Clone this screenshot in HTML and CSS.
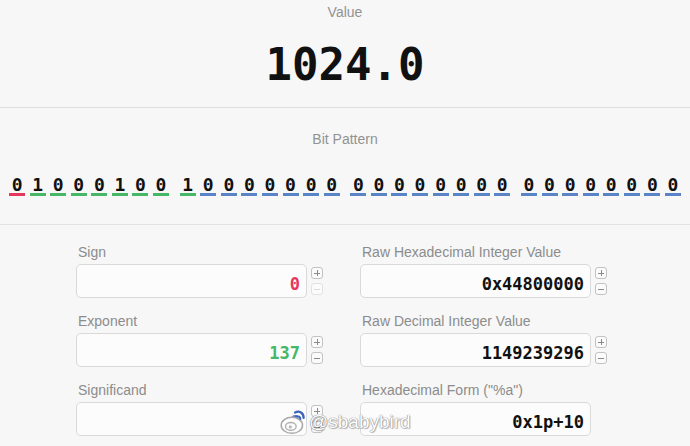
FILE: index.html
```html
<!DOCTYPE html>
<html>
<head>
<meta charset="utf-8">
<link rel="stylesheet" href="styles.css">
</head>
<body>
<section class="value-sec">
  <div class="cap">Value</div>
  <div class="big">1024.0</div>
</section>
<section class="bits-sec">
  <div class="cap">Bit Pattern</div>
  <div class="bits">
    <div class="grp">
      <span class="b sg">0</span><span class="b ex">1</span><span class="b ex">0</span><span class="b ex">0</span><span class="b ex">0</span><span class="b ex">1</span><span class="b ex">0</span><span class="b ex">0</span>
    </div>
    <div class="grp">
      <span class="b ex">1</span><span class="b mt">0</span><span class="b mt">0</span><span class="b mt">0</span><span class="b mt">0</span><span class="b mt">0</span><span class="b mt">0</span><span class="b mt">0</span>
    </div>
    <div class="grp">
      <span class="b mt">0</span><span class="b mt">0</span><span class="b mt">0</span><span class="b mt">0</span><span class="b mt">0</span><span class="b mt">0</span><span class="b mt">0</span><span class="b mt">0</span>
    </div>
    <div class="grp">
      <span class="b mt">0</span><span class="b mt">0</span><span class="b mt">0</span><span class="b mt">0</span><span class="b mt">0</span><span class="b mt">0</span><span class="b mt">0</span><span class="b mt">0</span>
    </div>
  </div>
</section>
<section class="form">
  <div class="field">
    <label class="lbl">Sign</label>
    <div class="row">
      <div class="box red">0</div>
      <div class="step"><span class="btn plus"></span><span class="btn minus dis"></span></div>
    </div>
  </div>
  <div class="field">
    <label class="lbl">Raw Hexadecimal Integer Value</label>
    <div class="row">
      <div class="box">0x44800000</div>
      <div class="step"><span class="btn plus"></span><span class="btn minus"></span></div>
    </div>
  </div>
  <div class="field">
    <label class="lbl">Exponent</label>
    <div class="row">
      <div class="box green">137</div>
      <div class="step"><span class="btn plus"></span><span class="btn minus"></span></div>
    </div>
  </div>
  <div class="field">
    <label class="lbl">Raw Decimal Integer Value</label>
    <div class="row">
      <div class="box">1149239296</div>
      <div class="step"><span class="btn plus"></span><span class="btn minus"></span></div>
    </div>
  </div>
  <div class="field">
    <label class="lbl">Significand</label>
    <div class="row">
      <div class="box blue">0</div>
      <div class="step"><span class="btn plus"></span><span class="btn minus"></span></div>
    </div>
  </div>
  <div class="field">
    <label class="lbl">Hexadecimal Form ("%a")</label>
    <div class="row">
      <div class="box">0x1p+10</div>
    </div>
  </div>
</section>
<div class="wm">
  <svg class="wm-logo" width="28" height="32" viewBox="0 0 26 30">
    <ellipse cx="11" cy="20" rx="10" ry="7.5" fill="#fdfdfd" stroke="#a8a8a8" stroke-width="1.4"/>
    <ellipse cx="10" cy="21" rx="5" ry="3.6" fill="none" stroke="#b0b0b0" stroke-width="1.3"/>
    <circle cx="9.5" cy="21.5" r="1.5" fill="#b8b8b8"/>
    <path d="M14 8 C18 6 22 8 22 13" fill="none" stroke="#3d64b8" stroke-width="2.2" stroke-linecap="round"/>
    <path d="M15 11.5 C17 11 19 12 19 14" fill="none" stroke="#3d64b8" stroke-width="1.8" stroke-linecap="round"/>
  </svg>
  <span class="wm-text">@sbabybird</span>
</div>
</body>
</html>
```

FILE: styles.css
```css
* {
  box-sizing: border-box;
}

body {
  margin: 0;
  width: 690px;
  height: 446px;
  overflow: hidden;
  position: relative;
  background: #f7f7f7;
  font-family: "Liberation Sans", Arial, sans-serif;
}

.cap {
  font-size: 14px;
  line-height: 16px;
  color: #929292;
  text-align: center;
}

.value-sec {
  height: 108px;
  padding-top: 4px;
  border-bottom: 1px solid #dedede;
}

.big {
  margin-top: 23px;
  font-family: "DejaVu Sans Mono", monospace;
  font-weight: 700;
  font-size: 44px;
  line-height: 44px;
  text-align: center;
  color: #111;
}

.bits-sec {
  height: 117px;
  padding-top: 23px;
  border-bottom: 1px solid #e2e2e2;
}

.bits {
  margin-top: 29px;
  display: flex;
  justify-content: center;
  gap: 10.7px;
}

.grp {
  display: flex;
  gap: 4.57px;
}

.b {
  width: 16px;
  text-align: center;
  font-family: "DejaVu Sans Mono", monospace;
  font-weight: 700;
  font-size: 18px;
  line-height: 17px;
  color: #111;
  border-bottom: 3px solid #5a84c8;
}

.b.sg { border-bottom-color: #e6375c; }
.b.ex { border-bottom-color: #45b766; }
.b.mt { border-bottom-color: #5a84c8; }

.form {
  padding: 19px 0 0 76px;
  display: grid;
  grid-template-columns: 248px 248px;
  column-gap: 36px;
  row-gap: 15px;
}

.lbl {
  display: block;
  font-size: 14px;
  line-height: 16px;
  color: #8c8c8c;
  padding-left: 2px;
  margin-bottom: 4px;
}

.row {
  display: flex;
  align-items: center;
  gap: 4px;
}

.box {
  width: 231px;
  height: 34px;
  border: 1px solid #d9d9d9;
  border-radius: 5px;
  background: #fcfcfc;
  text-align: right;
  padding: 6px 6px 0 6px;
  font-family: "DejaVu Sans Mono", monospace;
  font-weight: 700;
  font-size: 17px;
  line-height: 26px;
  color: #111;
}

.box.red { color: #e6375c; }
.box.green { color: #45b766; }
.box.blue { color: #5a84c8; }

.step {
  display: flex;
  flex-direction: column;
  gap: 4px;
}

.btn {
  position: relative;
  width: 12px;
  height: 12px;
  border: 1px solid #c2c2c2;
  border-radius: 3px;
  background: #fbfbfb;
}

.btn::before {
  content: "";
  position: absolute;
  left: 2px;
  top: 4.5px;
  width: 6px;
  height: 1px;
  background: #8a8a8a;
}

.btn.plus::after {
  content: "";
  position: absolute;
  left: 4.5px;
  top: 2px;
  width: 1px;
  height: 6px;
  background: #8a8a8a;
}

.btn.dis {
  border-color: #e2e2e2;
}

.btn.dis::before {
  background: #dcdcdc;
}

.wm {
  position: absolute;
  left: 280px;
  top: 404px;
  display: flex;
  align-items: flex-end;
  gap: 1px;
}

.wm-text {
  font-family: "Liberation Sans", Arial, sans-serif;
  font-size: 19px;
  line-height: 22px;
  color: #ffffff;
  margin-bottom: 3px;
  text-shadow: 0 0 1px #808080, 0 0 1px #808080, 1px 1px 1px rgba(0,0,0,0.25);
}
```
